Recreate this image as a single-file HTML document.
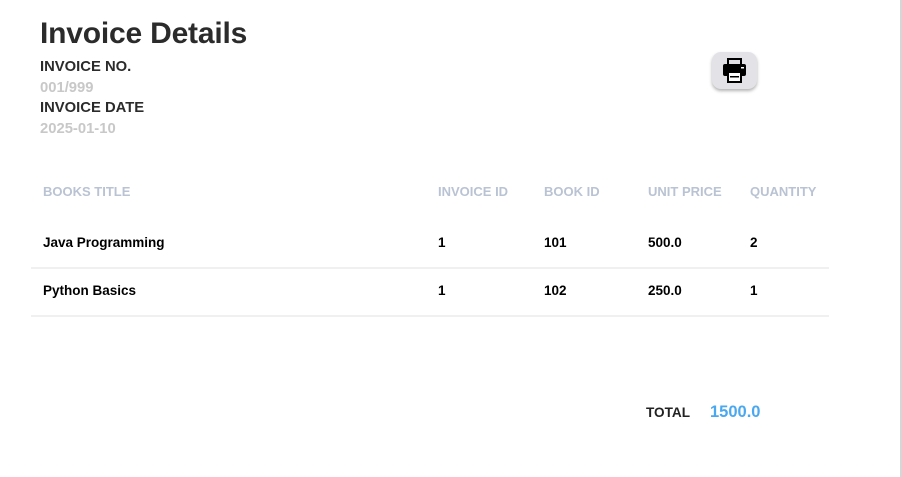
<!DOCTYPE html>
<html><head><style>
*{margin:0;padding:0;box-sizing:border-box}
body{width:902px;height:477px;background:#fff;font-family:"Liberation Sans",sans-serif;position:relative;overflow:hidden}
.edge{position:absolute;right:0;top:0;width:2px;height:477px;background:#d6d6d6}
h1{position:absolute;left:40px;top:17px;font-size:30px;font-weight:bold;color:#2b2b2b;letter-spacing:-0.2px}
.lab{position:absolute;left:40px;font-size:14.8px;font-weight:bold;color:#2b2b2b}
.val{position:absolute;left:40px;font-size:14.8px;font-weight:bold;color:#c8c8c8}
.btn{position:absolute;left:712px;top:52px;width:45px;height:37px;border-radius:9px;background:#e3e3e7;box-shadow:0 2px 3px rgba(0,0,0,.3)}
.t{position:absolute;font-weight:bold}
.h{color:#b9c3d3;top:184px;font-size:13px}
.r{color:#000;font-size:13.5px}
.line{position:absolute;left:31px;width:798px;height:2px;background:#f0f0f0}
</style></head><body>
<div class="edge"></div>
<h1>Invoice Details</h1>
<div class="lab" style="top:59px">INVOICE NO.</div>
<div class="val" style="top:80px">001/999</div>
<div class="lab" style="top:100px">INVOICE DATE</div>
<div class="val" style="top:121px">2025-01-10</div>
<div class="btn"><svg width="45" height="37" viewBox="0 0 45 37">
<rect x="16" y="7" width="13" height="6" fill="none" stroke="#000" stroke-width="2"/>
<rect x="11" y="12" width="23" height="12" rx="2" fill="#000"/>
<rect x="16" y="20" width="13" height="10" fill="#fff" stroke="#000" stroke-width="2"/>
<rect x="18" y="24" width="9" height="1.5" fill="#000"/>
<rect x="29" y="15" width="3" height="1.5" fill="#fff"/>
</svg></div>
<div class="t h" style="left:43px">BOOKS TITLE</div>
<div class="t h" style="left:438px">INVOICE ID</div>
<div class="t h" style="left:544px">BOOK ID</div>
<div class="t h" style="left:648px">UNIT PRICE</div>
<div class="t h" style="left:750px">QUANTITY</div>
<div class="t r" style="left:43px;top:235px">Java Programming</div>
<div class="t r" style="left:438px;top:235px">1</div>
<div class="t r" style="left:544px;top:235px">101</div>
<div class="t r" style="left:648px;top:235px">500.0</div>
<div class="t r" style="left:750px;top:235px">2</div>
<div class="line" style="top:267px"></div>
<div class="t r" style="left:43px;top:283px">Python Basics</div>
<div class="t r" style="left:438px;top:283px">1</div>
<div class="t r" style="left:544px;top:283px">102</div>
<div class="t r" style="left:648px;top:283px">250.0</div>
<div class="t r" style="left:750px;top:283px">1</div>
<div class="line" style="top:315px"></div>
<div class="t" style="left:646px;top:405px;font-size:13.6px;color:#222">TOTAL</div>
<div class="t" style="left:710px;top:403px;font-size:16.5px;color:#4aa8f0">1500.0</div>
</body></html>
